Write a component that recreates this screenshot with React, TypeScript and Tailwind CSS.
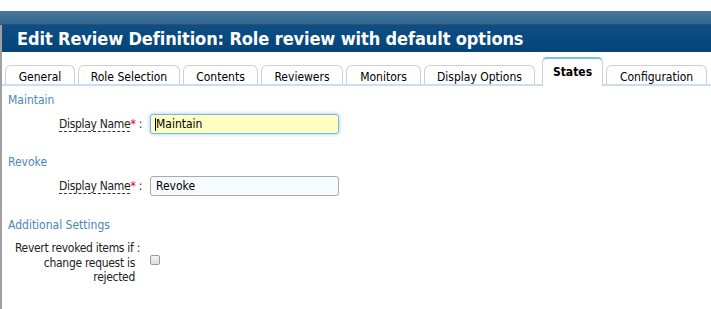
import React from "react";

const tabs = [
  { label: "General", w: 70 },
  { label: "Role Selection", w: 102 },
  { label: "Contents", w: 75 },
  { label: "Reviewers", w: 82 },
  { label: "Monitors", w: 75 },
  { label: "Display Options", w: 111 },
  { label: "States", w: 61, active: true },
  { label: "Configuration", w: 101 },
];

function Label() {
  return (
    <div className="w-[134px] text-right text-[12px] text-[#222] tracking-[-0.3px]">
      <span className="border-b border-dashed border-[#333] leading-[14px]">Display Name</span>
      <span className="text-[#e00000]">*</span>
      <span> :</span>
    </div>
  );
}

export default function App() {
  return (
    <div
      className="w-[711px] h-[309px] bg-white overflow-hidden [font-stretch:condensed]"
      style={{ fontFamily: "'DejaVu Sans', Verdana, sans-serif" }}
    >
      <div className="h-[11px] bg-white" />
      <div className="h-[14px] bg-gradient-to-b from-[#4578a0] to-[#34658e] border-b border-[#2b5275]" />
      <div className="flex h-[284px]">
        <div className="w-[2px] bg-[#a0a0a0]" />
        <div className="flex-1 flex flex-col">
          <div className="h-[27px] bg-gradient-to-b from-[#0d4f85] to-[#054478] flex items-center pl-[15px]">
            <span className="text-white font-bold text-[18px] tracking-[-0.1px]">
              Edit Review Definition: Role review with default options
            </span>
          </div>
          <div className="h-[34px] flex items-end pl-[3px] gap-[3px] border-b-[2px] border-[#c8def2]">
            {tabs.map((t) =>
              t.active ? (
                <div
                  key={t.label}
                  className="h-[29px] mb-[-2px] bg-white border border-b-0 border-[#cfcfcf] border-t-[2px] border-t-[#78c0ec] rounded-t-[5px] flex items-start justify-center pt-[6px] leading-[14px] text-[12px] font-bold text-black ml-[4px]"
                  style={{ width: t.w }}
                >
                  {t.label}
                </div>
              ) : (
                <div
                  key={t.label}
                  className="h-[19px] bg-white border border-b-0 border-[#cfcfcf] rounded-t-[6px] flex items-center justify-center pt-[3px] text-[12px] text-black"
                  style={{ width: t.w }}
                >
                  {t.label}
                </div>
              )
            )}
          </div>
          <div className="pl-[6px] pt-[6px] text-[12px]">
            <div className="text-[#4a86b8] h-[16px] leading-[16px]">Maintain</div>
            <div className="flex items-center mt-[6px] h-[20px]">
              <Label />
              <div className="ml-[8px] w-[189px] h-[20px] rounded-[3px] border border-[#7fb2e5] bg-[#ffffc0] shadow-[0_0_4px_#9cc8f0] flex items-center pl-[4px] text-black">
                <span className="w-[1px] h-[13px] bg-black" />
                Maintain
              </div>
            </div>
            <div className="text-[#4a86b8] h-[16px] leading-[16px] mt-[20px]">Revoke</div>
            <div className="flex items-center mt-[6px] h-[20px]">
              <Label />
              <div className="ml-[8px] w-[189px] h-[20px] rounded-[3px] border border-[#a8a8a8] bg-[#f5fbff] flex items-center pl-[5px] text-black">
                Revoke
              </div>
            </div>
            <div className="text-[#4a86b8] h-[16px] leading-[16px] mt-[21px]">Additional Settings</div>
            <div className="flex items-start mt-[8px]">
              <div className="w-[127px] text-right leading-[14.5px] text-[#222] whitespace-nowrap tracking-[-0.3px]">
                <div className="mr-[-5px]">Revert revoked items if :</div>
                <div>change request is</div>
                <div>rejected</div>
              </div>
              <div className="mt-[14px] ml-[15px] w-[10px] h-[10px] rounded-[2px] border border-[#9a9a9a] bg-gradient-to-b from-[#f4f4f4] to-[#dcdcdc]" />
            </div>
          </div>
        </div>
      </div>
    </div>
  );
}
